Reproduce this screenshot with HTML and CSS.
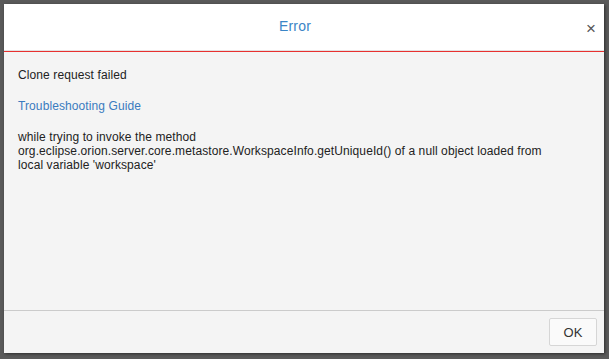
FILE: index.html
```html
<!DOCTYPE html>
<html lang="en">
  <head>
    <meta charset="UTF-8" />
    <title>Error</title>
    <link rel="stylesheet" href="styles.css">
  </head>
  <body>
    <div class="dialog">
      <div class="dialogHeader">
        <span class="dialogTitle">Error</span>
        <button class="dialogClose">&times;</button>
      </div>
      <div class="dialogBody">
        <p>Clone request failed</p>
        <p><a class="guide" href="#">Troubleshooting Guide</a></p>
        <p>
          while trying to invoke the method<br>
          org.eclipse.orion.server.core.metastore.WorkspaceInfo.getUniqueId() of a null object loaded from<br>
          local variable 'workspace'
        </p>
      </div>
      <div class="dialogFooter">
        <button class="okButton">OK</button>
      </div>
    </div>
  </body>
</html>
```

FILE: styles.css
```css
body {
  margin: 0;
  padding: 4px;
  background-color: #5a5a5a;
  font-family: "Liberation Sans", Arial, sans-serif;
}
.dialog {
  width: 600px;
  height: 349px;
  display: flex;
  flex-direction: column;
  background-color: #f4f4f4;
  box-shadow: 1px 1px 3px rgba(0, 0, 0, 0.5);
}
.dialogHeader {
  height: 47px;
  box-sizing: border-box;
  padding-bottom: 3px;
  display: flex;
  align-items: center;
  justify-content: center;
  position: relative;
  background-color: #fff;
  border-bottom: 1px solid #e2e2e2;
  box-shadow: 0 1px 0 #e8312f;
  margin-bottom: 1px;
}
.dialogTitle {
  font-size: 14px;
  letter-spacing: 0.2px;
  color: #3a85c6;
  margin-right: 18px;
}
.dialogClose {
  position: absolute;
  right: 8px;
  top: 16px;
  border: none;
  background: none;
  padding: 0;
  font-family: "Liberation Sans", Arial, sans-serif;
  font-size: 17px;
  line-height: 17px;
  color: #555;
  cursor: pointer;
}
.dialogBody {
  flex: 1;
  padding: 16px 14px 0 14px;
  font-size: 12px;
  line-height: 14px;
  letter-spacing: 0.1px;
  color: #222;
}
.dialogBody p {
  margin: 0 0 17px 0;
}
.guide {
  color: #3a7bbf;
  text-decoration: none;
}
.dialogFooter {
  height: 43px;
  border-top: 1px solid #cbcbcb;
  display: flex;
  justify-content: flex-end;
  align-items: flex-start;
  padding: 7px 7px 0 0;
  box-sizing: border-box;
}
.okButton {
  width: 48px;
  height: 28px;
  background-color: #fafafa;
  border: 1px solid #d6d6d6;
  border-radius: 2px;
  font-family: "Liberation Sans", Arial, sans-serif;
  font-size: 13px;
  color: #333;
}
```
